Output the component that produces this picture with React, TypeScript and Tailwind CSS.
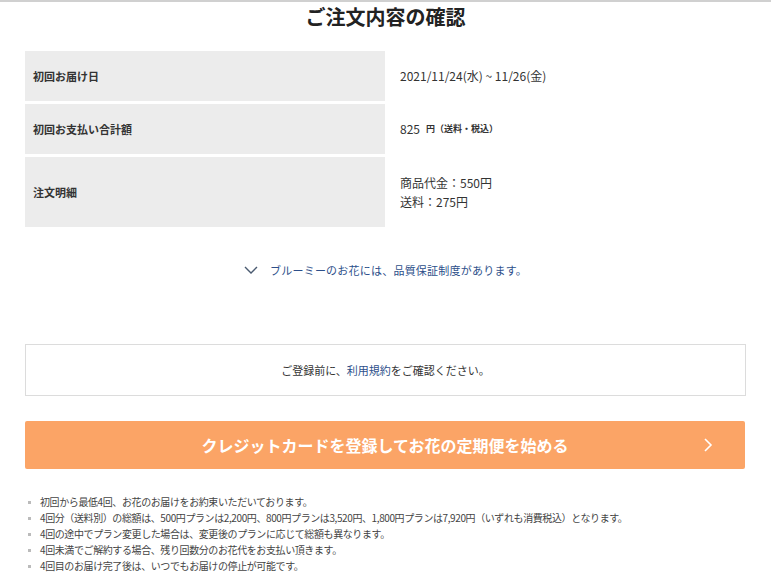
import React from 'react';

const rows = [
  { label: '初回お届け日', h: 'h-[50px]' },
  { label: '初回お支払い合計額', h: 'h-[50px]' },
  { label: '注文明細', h: 'h-[70px]' },
];

const notes = [
  '初回から最低4回、お花のお届けをお約束いただいております。',
  '4回分（送料別）の総額は、500円プランは2,200円、800円プランは3,520円、1,800円プランは7,920円（いずれも消費税込）となります。',
  '4回の途中でプラン変更した場合は、変更後のプランに応じて総額も異なります。',
  '4回未満でご解約する場合、残り回数分のお花代をお支払い頂きます。',
  '4回目のお届け完了後は、いつでもお届けの停止が可能です。',
];

export default function App() {
  return (
    <div
      className="w-[771px] h-[583px] bg-white text-[#333] overflow-hidden border-t-2 border-[#d0d0d0]"
      style={{ fontFamily: '"Noto Sans CJK JP", "Noto Sans", sans-serif' }}
    >
      {/* Title */}
      <h1 className="text-center text-[20px] font-bold leading-none pt-[5px] h-[49px] text-[#222]">
        ご注文内容の確認
      </h1>

      {/* Order table */}
      <div className="mx-[25px] flex flex-col gap-[3px]">
        <div className="flex h-[50px]">
          <div className="w-[360px] bg-[#ececec] flex items-center pl-[8px] text-[11px] font-bold">
            {rows[0].label}
          </div>
          <div className="flex-1 flex items-center pl-[15px] text-[12px]">2021/11/24(水) ~ 11/26(金)</div>
        </div>
        <div className="flex h-[50px]">
          <div className="w-[360px] bg-[#ececec] flex items-center pl-[8px] text-[11px] font-bold">
            {rows[1].label}
          </div>
          <div className="flex-1 flex items-center pl-[15px] text-[12px]">
            825<span className="ml-[6px] text-[9px] font-bold">円（送料・税込）</span>
          </div>
        </div>
        <div className="flex h-[70px]">
          <div className="w-[360px] bg-[#ececec] flex items-center pl-[8px] text-[11px] font-bold">
            {rows[2].label}
          </div>
          <div className="flex-1 flex flex-col justify-center pl-[15px] text-[12px] leading-[19px]">
            <span>商品代金：550円</span>
            <span>送料：275円</span>
          </div>
        </div>
      </div>

      {/* Quality guarantee */}
      <div className="flex items-center justify-center mt-[32px] h-[22px] text-[11px] tracking-[0.02em] text-[#2d4f8a]">
        <svg width="14" height="10" viewBox="0 0 14 10" className="mr-[12px]">
          <path d="M1 2l6 6 6-6" fill="none" stroke="#4a5a70" strokeWidth="1.4" />
        </svg>
        ブルーミーのお花には、品質保証制度があります。
      </div>

      {/* Terms */}
      <div className="mx-[25px] mt-[63px] h-[52px] border border-[#dcdcdc] flex items-center justify-center text-[11px]">
        ご登録前に、<span className="text-[#2d4f8a]">利用規約</span>をご確認ください。
      </div>

      {/* CTA */}
      <button className="mx-[25px] mt-[25px] w-[720px] h-[48px] bg-[#fba466] rounded-[2px] flex items-center relative text-white">
        <span className="flex-1 text-center text-[16px] font-bold">クレジットカードを登録してお花の定期便を始める</span>
        <svg width="10" height="16" viewBox="0 0 10 16" className="absolute right-[32px]">
          <path d="M2 2l6 6-6 6" fill="none" stroke="#fff" strokeWidth="1.6" />
        </svg>
      </button>

      {/* Notes */}
      <ul className="mx-[25px] mt-[25px] text-[10px] leading-[16px] tracking-[-0.04em] text-[#444]">
        {notes.map((n) => (
          <li key={n} className="flex items-center">
            <span className="w-[3px] h-[3px] bg-[#bbb] ml-[3px] mr-[9px] shrink-0" />
            {n}
          </li>
        ))}
      </ul>
    </div>
  );
}
